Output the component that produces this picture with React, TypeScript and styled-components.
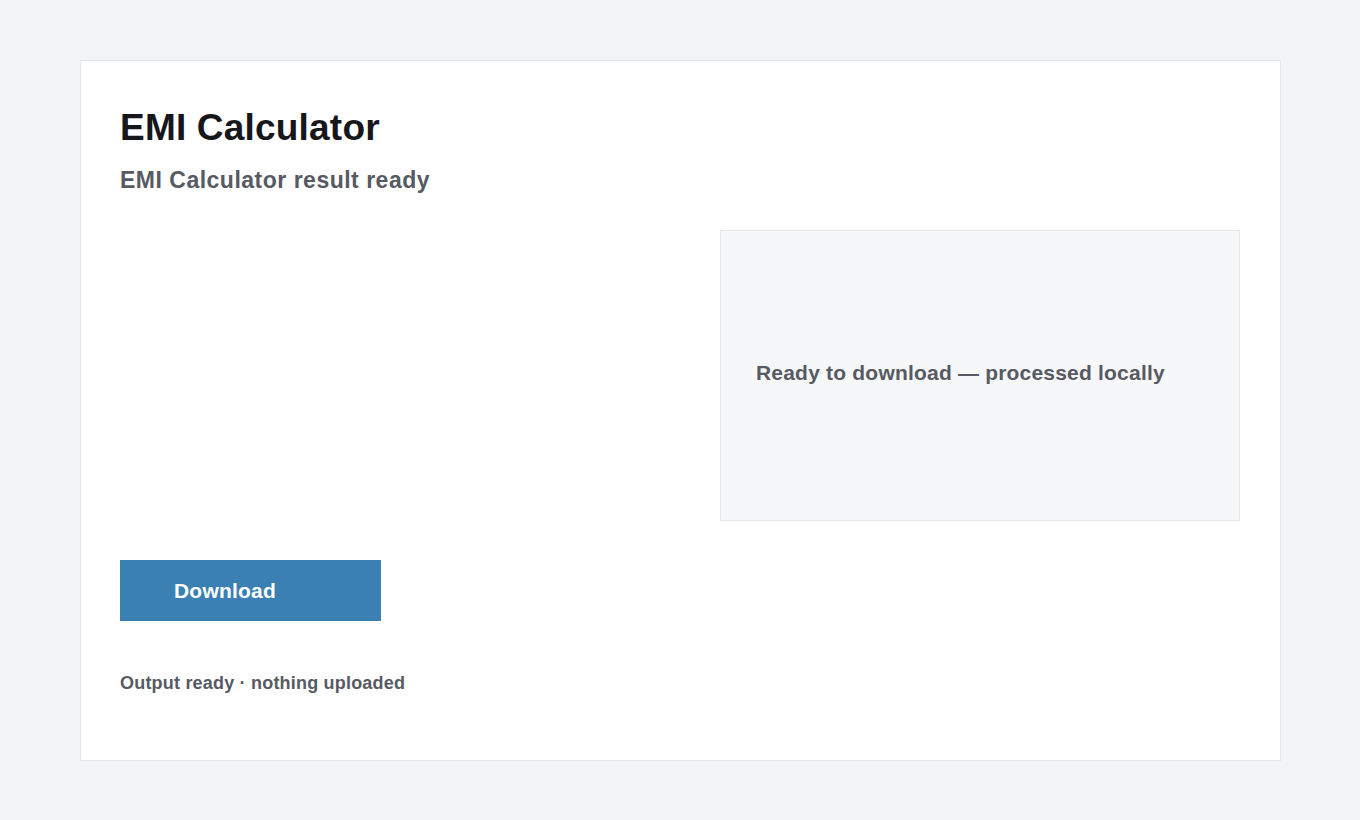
import styled, { createGlobalStyle } from "styled-components";

const GlobalStyle = createGlobalStyle`
  html, body {
    margin: 0;
    padding: 0;
    background: #f3f4f6;
    font-family: "Liberation Sans", Arial, sans-serif;
  }

  body {
    padding-top: 60px;
    min-height: 820px;
    box-sizing: border-box;
  }
`;

export default function App() {
  return (
    <>
      <GlobalStyle />
      <Card>
        <Header>
          <Title>EMI Calculator</Title>
          <Subtitle>EMI Calculator result ready</Subtitle>
        </Header>
        <ResultGrid>
          <div />
          <StatusPanel>
            <StatusText>Ready to download — processed locally</StatusText>
          </StatusPanel>
        </ResultGrid>
        <DownloadButton type="button">Download</DownloadButton>
        <FooterNote>Output ready · nothing uploaded</FooterNote>
      </Card>
    </>
  );
}

const Card = styled.main`
  box-sizing: border-box;
  width: 1201px;
  height: 701px;
  margin: 0 0 0 80px;
  padding: 5px 40px 0 39px;
  background: #ffffff;
  border: 1px solid #e4e6ea;
  display: flex;
  flex-direction: column;
  align-items: flex-start;
`;

const Header = styled.header`
  padding-top: 40px;
  display: flex;
  flex-direction: column;
  gap: 16px;
`;

const Title = styled.h1`
  margin: 0;
  font-size: 37px;
  line-height: 1.2;
  letter-spacing: 0.2px;
  font-weight: 700;
  color: #16171b;
`;

const Subtitle = styled.h2`
  margin: 0;
  font-size: 23px;
  line-height: 1.3;
  letter-spacing: 0.5px;
  font-weight: 700;
  color: #575a63;
`;

const ResultGrid = styled.section`
  margin-top: 34px;
  width: 100%;
  display: grid;
  grid-template-columns: 1fr 1fr;
  gap: 80px;
`;

const StatusPanel = styled.div`
  box-sizing: border-box;
  height: 291px;
  padding: 0 35px 6px;
  background: #f6f7f9;
  border: 1px solid #e5e7ea;
  display: flex;
  align-items: center;
`;

const StatusText = styled.p`
  margin: 0;
  font-size: 21px;
  letter-spacing: 0.2px;
  font-weight: 700;
  color: #575a63;
`;

const DownloadButton = styled.button`
  margin-top: 39px;
  width: 261px;
  height: 61px;
  padding: 0 0 0 54px;
  border: none;
  border-radius: 0;
  background: #3a80b3;
  color: #ffffff;
  font-family: "Liberation Sans", Arial, sans-serif;
  font-size: 21px;
  letter-spacing: 0.2px;
  font-weight: 700;
  text-align: left;
  cursor: pointer;
`;

const FooterNote = styled.p`
  margin: 50px 0 0;
  font-size: 18px;
  line-height: 1.4;
  letter-spacing: 0.2px;
  font-weight: 700;
  color: #575a63;
`;
